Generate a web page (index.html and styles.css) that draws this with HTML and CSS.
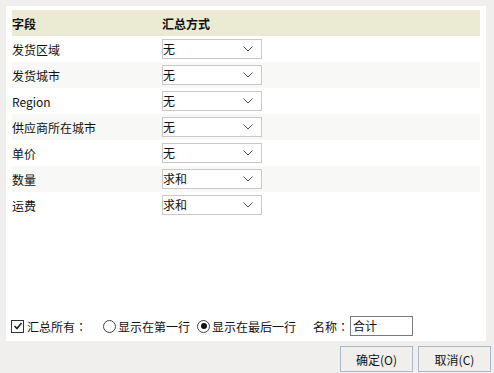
FILE: index.html
```html
<!DOCTYPE html>
<html lang="zh-CN">
<head>
  <meta charset="UTF-8">
  <title>汇总</title>
  <link rel="stylesheet" href="styles.css">
</head>
<body>
  <div class="panel">
    <div class="grid">
      <div class="row head">
        <div class="field">字段</div>
        <div class="mode">汇总方式</div>
      </div>
      <div class="row">
        <div class="field">发货区域</div>
        <div class="mode"><div class="select">无<svg width="10" height="6" viewBox="0 0 10 6"><path d="M0.5 0.5 L5 5 L9.5 0.5" fill="none" stroke="#555" stroke-width="1"/></svg></div></div>
      </div>
      <div class="row alt">
        <div class="field">发货城市</div>
        <div class="mode"><div class="select">无<svg width="10" height="6" viewBox="0 0 10 6"><path d="M0.5 0.5 L5 5 L9.5 0.5" fill="none" stroke="#555" stroke-width="1"/></svg></div></div>
      </div>
      <div class="row">
        <div class="field">Region</div>
        <div class="mode"><div class="select">无<svg width="10" height="6" viewBox="0 0 10 6"><path d="M0.5 0.5 L5 5 L9.5 0.5" fill="none" stroke="#555" stroke-width="1"/></svg></div></div>
      </div>
      <div class="row alt">
        <div class="field">供应商所在城市</div>
        <div class="mode"><div class="select">无<svg width="10" height="6" viewBox="0 0 10 6"><path d="M0.5 0.5 L5 5 L9.5 0.5" fill="none" stroke="#555" stroke-width="1"/></svg></div></div>
      </div>
      <div class="row">
        <div class="field">单价</div>
        <div class="mode"><div class="select">无<svg width="10" height="6" viewBox="0 0 10 6"><path d="M0.5 0.5 L5 5 L9.5 0.5" fill="none" stroke="#555" stroke-width="1"/></svg></div></div>
      </div>
      <div class="row alt">
        <div class="field">数量</div>
        <div class="mode"><div class="select">求和<svg width="10" height="6" viewBox="0 0 10 6"><path d="M0.5 0.5 L5 5 L9.5 0.5" fill="none" stroke="#555" stroke-width="1"/></svg></div></div>
      </div>
      <div class="row">
        <div class="field">运费</div>
        <div class="mode"><div class="select">求和<svg width="10" height="6" viewBox="0 0 10 6"><path d="M0.5 0.5 L5 5 L9.5 0.5" fill="none" stroke="#555" stroke-width="1"/></svg></div></div>
      </div>
    </div>

    <div class="options">
      <label class="opt check-all">
        <span class="checkbox"><svg width="10" height="10" viewBox="0 0 10 10"><path d="M1.5 5 L4 7.5 L8.5 2" fill="none" stroke="#222" stroke-width="1.6"/></svg></span>
        汇总所有<span class="colon">：</span>
      </label>
      <label class="opt first-row"><span class="radio"></span>显示在第一行</label>
      <label class="opt"><span class="radio on"></span>显示在最后一行</label>
      <label class="opt name">名称<span class="colon">：</span><span class="input">合计</span></label>
    </div>
  </div>

  <div class="footer">
    <button class="btn">确定(O)</button>
    <button class="btn">取消(C)</button>
  </div>
</body>
</html>
```

FILE: styles.css
```css
body {
  margin: 0;
  background: #f0efed;
  font-family: "Noto Sans CJK SC", "Noto Sans", sans-serif;
  font-size: 12px;
  color: #111;
  width: 494px;
  height: 373px;
  overflow: hidden;
}

.panel {
  margin: 6px 0 0 6px;
  width: 480px;
  height: 335px;
  background: #fff;
  box-sizing: border-box;
  padding: 4px 6px 0 6px;
  display: flex;
  flex-direction: column;
}

.grid {
  width: 468px;
}

.row {
  display: flex;
  align-items: center;
  height: 26px;
}

.row.alt {
  background: #f8f8f7;
}

.row.head {
  background: #ebebd3;
  font-weight: bold;
}

.field {
  width: 150px;
}

.mode {
  flex: 1;
}

.select {
  width: 100px;
  height: 20px;
  box-sizing: border-box;
  border: 1px solid #c9c9c9;
  background: #fff;
  display: flex;
  align-items: center;
  justify-content: space-between;
  padding: 0 8px 0 0;
  line-height: 18px;
}

.options {
  margin-top: auto;
  height: 28px;
  margin-bottom: 1px;
  display: flex;
  align-items: center;
}

.opt {
  display: flex;
  align-items: center;
}

.colon {
  font-family: "Noto Sans CJK TC", sans-serif;
}

.check-all {
  margin-left: -1px;
  width: 92px;
}

.checkbox {
  width: 11px;
  height: 11px;
  border: 1px solid #333;
  margin-right: 3px;
  display: flex;
  align-items: center;
  justify-content: center;
}

.radio {
  width: 11px;
  height: 11px;
  border: 1px solid #444;
  border-radius: 50%;
  margin-right: 2px;
  display: flex;
  align-items: center;
  justify-content: center;
}

.radio.on::after {
  content: "";
  width: 6px;
  height: 6px;
  border-radius: 50%;
  background: #111;
}

.first-row {
  margin-right: 7px;
}

.name {
  margin-left: 17px;
}

.input {
  width: 63px;
  height: 20px;
  box-sizing: border-box;
  border: 1px solid #7a7a7a;
  padding-left: 2px;
  line-height: 18px;
  margin-left: 1px;
}

.footer {
  display: flex;
  justify-content: flex-end;
  gap: 5px;
  padding: 5px 3px 0 0;
}

.btn {
  width: 73px;
  height: 26px;
  border: 1px solid #a9b7c6;
  background: #f0efed;
  font-family: "Noto Sans CJK SC", "Noto Sans", sans-serif;
  font-size: 12px;
  color: #111;
  padding: 0;
}
```
